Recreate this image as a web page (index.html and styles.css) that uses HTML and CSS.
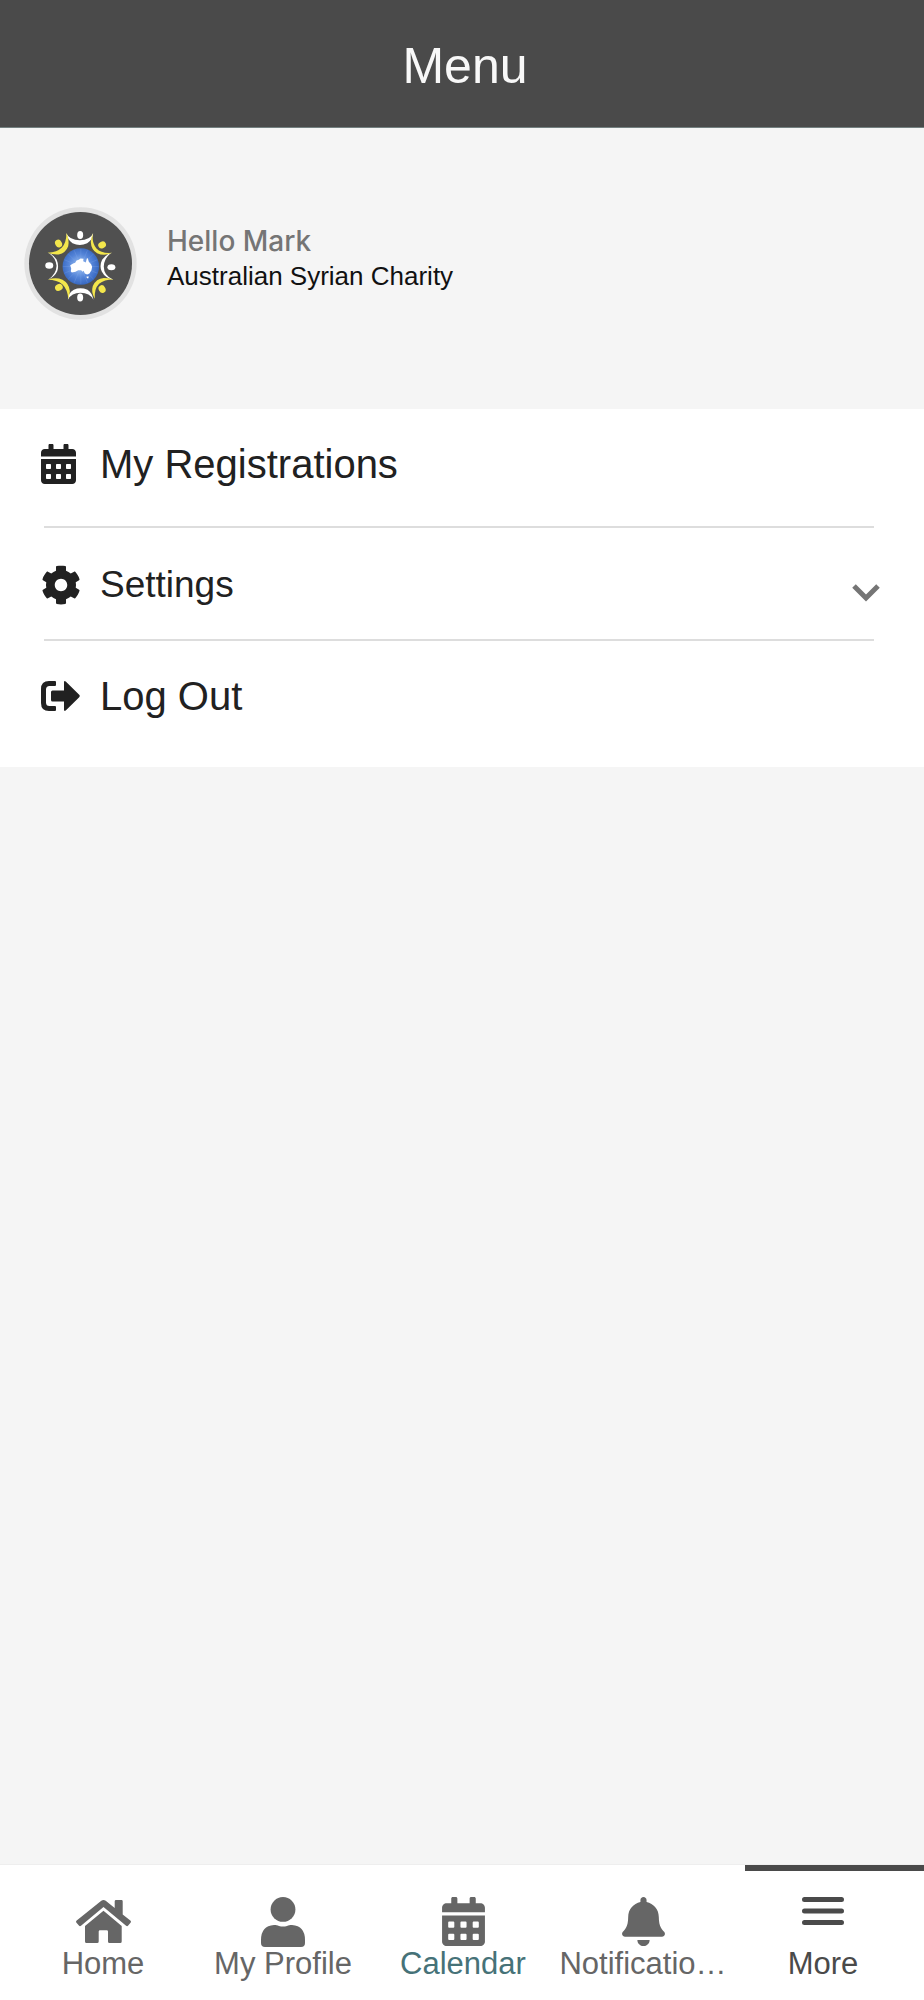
FILE: index.html
```html
<!DOCTYPE html>
<html lang="en">
<head>
  <meta charset="UTF-8">
  <meta name="viewport" content="width=device-width, initial-scale=1.0">
  <title>Menu</title>
  <link rel="stylesheet" href="styles.css">
</head>
<body>
  <!-- shared icon shapes -->
  <svg class="sprite" aria-hidden="true">
    <symbol id="calendar" viewBox="0 0 448 512">
      <path d="M400 64h-48V16c0-8.800-7.200-16-16-16h-32c-8.800 0-16 7.200-16 16v48H160V16c0-8.800-7.200-16-16-16h-32c-8.800 0-16 7.200-16 16v48H48C21.500 64 0 85.500 0 112v48h448v-48c0-26.500-21.500-48-48-48z"/>
      <path fill-rule="evenodd" d="M0 192h448v272c0 26.500-21.500 48-48 48H48c-26.500 0-48-21.500-48-48zM64 266v44q0 10 10 10h44q10 0 10-10v-44q0-10-10-10H74q-10 0-10 10zM192 266v44q0 10 10 10h44q10 0 10-10v-44q0-10-10-10h-44q-10 0-10 10zM320 266v44q0 10 10 10h44q10 0 10-10v-44q0-10-10-10h-44q-10 0-10 10zM64 394v44q0 10 10 10h44q10 0 10-10v-44q0-10-10-10H74q-10 0-10 10zM192 394v44q0 10 10 10h44q10 0 10-10v-44q0-10-10-10h-44q-10 0-10 10zM320 394v44q0 10 10 10h44q10 0 10-10v-44q0-10-10-10h-44q-10 0-10 10z"/>
    </symbol>
  </svg>

  <header class="top-bar">
    <h1>Menu</h1>
  </header>

  <main>
    <section class="profile">
      <svg class="avatar" viewBox="12 19 340 340" role="img" aria-label="Australian Syrian Charity logo">
        <defs>
          <radialGradient id="globe" cx="48%" cy="48%" r="54%">
            <stop offset="0" stop-color="#a5c8f5"/>
            <stop offset="0.600" stop-color="#5484d8"/>
            <stop offset="1" stop-color="#3565bd"/>
          </radialGradient>
        </defs>
        <circle cx="182" cy="189" r="169" fill="#e2e2e2"/>
        <circle cx="182" cy="189" r="155" fill="#505050"/>
        <circle cx="183" cy="198" r="55" fill="url(#globe)"/>
        <g stroke="#8db2ee" stroke-width="2" opacity="0.350">
          <path d="M183 145v106M130 198h106M145 160l76 76M145 236l76-76M163 149l40 98M134 178l98 40M134 218l98-40M163 247l40-98"/>
        </g>
        <path fill="#fff" d="M151 194L160 189L166 187L170 180L177 178L182 174L191 175L190 182L198 186L201 174L204 173L207 184L214 191L217 199L215 209L209 219L202 222L195 219L191 211L188 214L184 209L175 209L167 214L156 216L153 213L154 204zM200 228h7l-2 6-4-1z"/>
        <g fill="#fff">
          <path d="M139 98Q149 119 180 119Q211 119 220 98Q219 118 202 128Q180 138 158 128Q143 118 139 98z"/>
          <path d="M276 157Q254 169 252 198Q252 226 281 238Q256 233 246 213Q238 197 247 178Q256 163 276 157z"/>
          <path d="M221 298Q210 277 182 277Q155 277 144 298Q145 277 162 268Q181 259 203 268Q217 277 221 298z"/>
          <path d="M84 157Q107 168 110 196Q109 222 85 237Q104 229 112 212Q118 195 110 177Q102 163 84 157z"/>
          <ellipse cx="181" cy="103" rx="9" ry="12"/>
          <ellipse cx="275" cy="200" rx="12" ry="9"/>
          <ellipse cx="181" cy="291" rx="9" ry="12"/>
          <ellipse cx="88" cy="195" rx="12" ry="10"/>
        </g>
        <g fill="#f3e64c">
          <path d="M219 97Q215 126 230 144Q245 160 277 157Q253 168 232 158Q214 147 213 124Q214 109 219 97z"/>
          <path d="M281 237Q253 237 238 250Q223 265 225 295Q213 276 219 257Q229 235 252 233Q268 233 281 237z"/>
          <path d="M145 296Q144 268 128 252Q111 238 84 238Q107 229 128 238Q148 249 150 272Q149 287 145 296z"/>
          <path d="M83 157Q112 155 126 141Q139 127 140 97Q149 116 145 137Q138 157 116 162Q98 163 83 157z"/>
          <ellipse cx="247" cy="133" rx="12" ry="10" transform="rotate(-25 247 133)"/>
          <ellipse cx="247" cy="266" rx="10" ry="12" transform="rotate(-30 247 266)"/>
          <ellipse cx="117" cy="261" rx="12" ry="10" transform="rotate(-30 117 261)"/>
          <ellipse cx="116" cy="129" rx="10" ry="12" transform="rotate(-30 116 129)"/>
        </g>
      </svg>
      <div class="profile-text">
        <p class="hello">Hello Mark</p>
        <p class="charity">Australian Syrian Charity</p>
      </div>
    </section>

    <ul class="menu">
      <li>
        <a class="menu-row" href="#registrations">
          <span class="menu-icon"><svg width="35" height="40" aria-hidden="true"><use href="#calendar"/></svg></span>
          My Registrations
        </a>
      </li>
      <li>
        <button class="menu-row settings" type="button">
          <span class="menu-icon gear">
            <svg width="40" height="40" viewBox="0 0 512 512" aria-hidden="true"><path d="M487.400 315.700l-42.600-24.600c4.300-23.200 4.300-47 0-70.200l42.600-24.600c4.900-2.800 7.100-8.600 5.500-14-11.100-35.600-30-67.800-54.700-94.600-3.800-4.100-10-5.100-14.800-2.300L380.800 110c-17.900-15.400-38.500-27.300-60.800-35.100V25.800c0-5.600-3.900-10.500-9.400-11.700-36.700-8.200-74.300-7.800-109.200 0-5.500 1.200-9.400 6.100-9.400 11.700V75c-22.200 7.900-42.800 19.800-60.800 35.100L88.700 85.500c-4.900-2.800-11-1.900-14.800 2.300-24.700 26.700-43.600 58.900-54.700 94.600-1.700 5.400.6 11.200 5.500 14L67.300 221c-4.300 23.200-4.300 47 0 70.200l-42.600 24.600c-4.900 2.800-7.100 8.600-5.500 14 11.100 35.600 30 67.800 54.700 94.600 3.800 4.100 10 5.100 14.800 2.300l42.600-24.600c17.900 15.400 38.500 27.300 60.800 35.100v49.200c0 5.600 3.900 10.500 9.400 11.700 36.700 8.200 74.300 7.800 109.200 0 5.500-1.200 9.400-6.100 9.400-11.700v-49.200c22.200-7.900 42.800-19.800 60.800-35.100l42.600 24.600c4.900 2.800 11 1.900 14.800-2.300 24.700-26.700 43.600-58.900 54.700-94.600 1.500-5.500-.7-11.300-5.600-14.100zM256 336c-44.100 0-80-35.900-80-80s35.900-80 80-80 80 35.900 80 80-35.900 80-80 80z"/></svg>
          </span>
          Settings
          <svg class="chevron" width="28" height="18" viewBox="0 0 28 18" aria-hidden="true"><path d="M2 2l12 12L26 2" fill="none" stroke="#757575" stroke-width="5"/></svg>
        </button>
      </li>
      <li>
        <a class="menu-row logout" href="#logout">
          <span class="menu-icon"><svg width="39" height="30" viewBox="0 0 39 30" aria-hidden="true"><path d="M14 0H8Q0 0 0 8v14q0 8 8 8h6q1 0 1-1v-3q0-1-1-1H8.500Q5 25 5 21.500v-13Q5 5 8.500 5H14q1 0 1-1V1q0-1-1-1zM11.500 9.500H23V1.500Q23 -1 25 .7L38.200 13.800Q39.300 15 38.200 16.200L25 29.300Q23 31 23 28.500v-8H11.500q-1.500 0-1.500-1.500v-8q0-1.500 1.500-1.500z"/></svg></span>
          Log Out
        </a>
      </li>
    </ul>
  </main>

  <nav class="tab-bar">
    <a class="tab" href="#home">
      <span class="tab-icon"><svg width="55" height="43" viewBox="0 0 55 43" aria-hidden="true"><path d="M25.300.8Q27.500-.8 29.700.8L38.700 8V1.200Q38.700 0 40 0h5.500q1.200 0 1.200 1.200v13.300l7.600 6.100q1.200 1 .2 2.200l-2.300 2.800q-1 1.100-2.100.2L27.500 7 5 25.800q-1.100.9-2.100-.2L.5 22.800q-1-1.200.2-2.200zM27.500 10.800L45.700 26v15.500q0 1.500-1.500 1.500H33.500Q32 43 32 41.500v-10q0-1.300-1.300-1.300H24q-1.300 0-1.300 1.300v10q0 1.500-1.500 1.500H10.500Q9 43 9 41.500V26z"/></svg></span>
      Home
    </a>
    <a class="tab" href="#profile">
      <span class="tab-icon"><svg width="44" height="50" viewBox="0 0 44 50" aria-hidden="true"><circle cx="22" cy="12.400" r="12.400"/><path d="M13 28c2 0 3.500.4 5 .9q4 1.300 8 0c1.500-.5 3-.9 5-.9q13 1 13 15v3q0 4-4 4H4q-4 0-4-4v-3q0-14 13-15z"/></svg></span>
      My Profile
    </a>
    <a class="tab calendar" href="#calendar-page">
      <span class="tab-icon"><svg width="43" height="49" aria-hidden="true"><use href="#calendar"/></svg></span>
      Calendar
    </a>
    <a class="tab" href="#notifications">
      <span class="tab-icon"><svg width="43" height="49" viewBox="0 0 448 512" aria-hidden="true"><path d="M224 512c35.320 0 63.970-28.650 63.970-64H160.030c0 35.350 28.650 64 63.970 64zm215.390-149.710c-19.320-20.760-55.470-51.990-55.470-154.290 0-77.700-54.480-139.900-127.940-155.160V32c0-17.670-14.320-32-31.980-32s-31.980 14.330-31.980 32v20.840C118.560 68.100 64.080 130.300 64.080 208c0 102.300-36.150 133.530-55.470 154.290-6 6.450-8.660 14.160-8.610 21.710.11 16.400 12.980 32 32.100 32h383.800c19.120 0 32-15.600 32.100-32 .05-7.550-2.610-15.270-8.610-21.710z"/></svg></span>
      Notificatio…
    </a>
    <a class="tab active" href="#more" aria-current="page">
      <span class="tab-icon top"><svg width="42" height="28" viewBox="0 0 42 28" aria-hidden="true"><path d="M2.500 2.500h37M2.500 14h37M2.500 25.500h37" fill="none" stroke="currentColor" stroke-width="5" stroke-linecap="round"/></svg></span>
      More
    </a>
  </nav>
</body>
</html>
```
FILE: styles.css
```css
* {
  box-sizing: border-box;
}
body {
  display: flex;
  flex-direction: column;
  min-height: 100vh;
  margin: 0;
  background-color: #f5f5f5;
  color: #212121;
  font-family: "Liberation Sans", Arial, sans-serif;
}
svg {
  display: block;
  fill: currentColor;
}
.sprite {
  position: absolute;
  width: 0;
  height: 0;
}
a {
  color: inherit;
  text-decoration: none;
}
main {
  flex: 1;
}

/* header */
.top-bar {
  padding: 38px 16px 33px 22px;
  background-color: #4a4a4a;
  border-bottom: 1px solid #738080;
  color: #f8f8f8;
}
.top-bar h1 {
  margin: 0;
  font-size: 50px;
  font-weight: normal;
  line-height: 56px;
  text-align: center;
}

/* profile */
.profile {
  display: flex;
  gap: 30px;
  padding: 79px 24px 89px;
}
.avatar {
  flex: none;
  width: 113px;
  height: 113px;
}
.profile-text {
  padding-top: 17px;
}
.profile-text p {
  margin: 0;
}
.hello {
  color: #757575;
  font-family: Inter, sans-serif;
  font-size: 28px;
  font-weight: 500;
  line-height: 34px;
}
.charity {
  color: #111;
  font-size: 26px;
  line-height: 36px;
}

/* menu list */
.menu {
  margin: 0;
  padding: 0 44px 0 41px;
  background-color: #fff;
  list-style: none;
}
.menu li:not(:last-child)::after {
  content: "";
  display: block;
  height: 2px;
  margin: 0 6px 0 3px;
  background-color: #ddd;
}
.menu-row {
  display: flex;
  align-items: center;
  gap: 19px;
  width: 100%;
  padding: 32px 0 39px;
  font-size: 40px;
  line-height: 46px;
}
.menu-row.settings {
  padding: 34px 0 31px;
  border: 0;
  background: none;
  color: inherit;
  font-family: inherit;
  font-size: 37px;
  text-align: left;
  cursor: pointer;
}
.menu-row.logout {
  padding-bottom: 48px;
}
.menu-icon {
  display: flex;
  flex: none;
  width: 40px;
}
.chevron {
  align-self: flex-end;
  margin: 0 0 6px auto;
}

/* bottom tabs */
.tab-bar {
  display: grid;
  grid-template-columns: repeat(5, 1fr);
  padding: 0 11px 0 13px;
  background-color: #fff;
  border-top: 1px solid #eee;
}
.tab {
  position: relative;
  display: flex;
  flex-direction: column;
  align-items: center;
  padding: 32px 0 18px;
  color: #666;
  font-size: 31px;
  line-height: 36px;
  white-space: nowrap;
}
.tab-icon {
  display: flex;
  align-items: center;
  height: 49px;
}
.tab-icon.top {
  align-items: flex-start;
}
.tab.calendar {
  color: #467278;
}
.tab.calendar svg {
  color: #666;
}
.tab.active {
  color: #4a4a4a;
}
.tab.active::before {
  content: "";
  position: absolute;
  top: 0;
  right: -11px;
  left: 12px;
  height: 6px;
  background-color: #4a4a4a;
}
```
